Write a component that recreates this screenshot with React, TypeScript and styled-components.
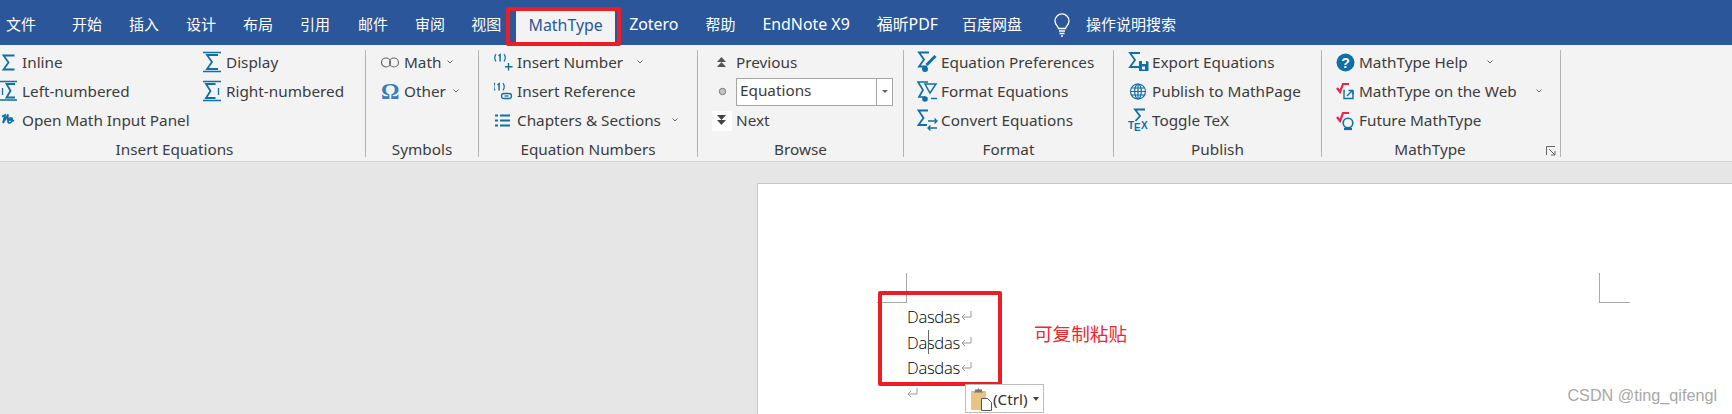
import React from "react";
import styled, { createGlobalStyle } from "styled-components";

const BLUE = "#0f6fa8";
const RED = "#e8254a";

const Global = createGlobalStyle`
  html, body { margin: 0; padding: 0; background: #e6e6e6; }
  body { font-family: "Noto Sans", "Noto Sans CJK SC", sans-serif; overflow: hidden; }
`;

const Screen = styled.div`
  width: 1732px;
  height: 414px;
  display: flex;
  flex-direction: column;
  overflow: hidden;
  position: relative;
  background: #e6e6e6;
`;

const TitleBar = styled.div`
  height: 45px;
  flex: none;
  display: flex;
  align-items: flex-end;
  background: #2b579a;
  padding-left: 6px;
`;

const Tab = styled.div<{ $active?: boolean; $gap?: number; $latin?: boolean }>`
  height: ${(p) => (p.$active ? 35 : 45)}px;
  line-height: ${(p) => (p.$active ? 30 : 49)}px;
  margin-left: ${(p) => p.$gap ?? 0}px;
  width: ${(p) => (p.$active ? "99px" : "auto")};
  text-align: center;
  font-size: ${(p) => (p.$latin ? 15.9 : 15)}px;
  white-space: nowrap;
  color: ${(p) => (p.$active ? "#2b579a" : "#fff")};
  background: ${(p) => (p.$active ? "#f3f3f3" : "transparent")};
`;

const Bulb = styled.svg`
  width: 18px;
  height: 24px;
  margin-left: 31px;
  margin-bottom: 8px;
  flex: none;
`;

const Ribbon = styled.div`
  height: 117px;
  flex: none;
  box-sizing: border-box;
  padding-top: 5px;
  display: flex;
  align-items: flex-start;
  background: #f3f3f3;
  border-bottom: 1px solid #d2d2d2;
`;

const Group = styled.section<{ $width: number }>`
  position: relative;
  width: ${(p) => p.$width}px;
  height: 107px;
  flex: none;
  box-sizing: border-box;
  border-right: 1px solid #b4b4b4;
  display: flex;
  flex-direction: column;
`;

const Columns = styled.div`
  display: flex;
`;

const Stack = styled.div<{ $pad?: number; $width?: number }>`
  display: flex;
  flex-direction: column;
  row-gap: 4px;
  padding-left: ${(p) => p.$pad ?? 0}px;
  ${(p) => (p.$width ? `width: ${p.$width}px;` : "")}
`;

const Row = styled.div`
  height: 25px;
  box-sizing: border-box;
  padding-bottom: 2px;
  display: flex;
  align-items: center;
  font-size: 15.3px;
  color: #3c3c3c;
  white-space: nowrap;
`;

const IconSlot = styled.span<{ $w: number }>`
  width: ${(p) => p.$w}px;
  height: 25px;
  margin-bottom: -2px;
  flex: none;
  display: flex;
  align-items: center;
`;

const Chevron = styled.svg<{ $gap: number }>`
  width: 8px;
  height: 6px;
  margin-left: ${(p) => p.$gap}px;
  flex: none;
`;

const GroupLabel = styled.div<{ $shift?: number }>`
  margin-top: auto;
  margin-bottom: 1px;
  padding-right: ${(p) => p.$shift ?? 0}px;
  height: 14px;
  line-height: 14px;
  font-size: 15.3px;
  color: #3c3c3c;
  text-align: center;
  white-space: nowrap;
`;

const Launcher = styled.svg`
  position: absolute;
  right: 4px;
  bottom: 1px;
  width: 10px;
  height: 10px;
`;

const Omega = styled.span`
  font-family: "Liberation Serif", serif;
  font-weight: 700;
  font-size: 23px;
  line-height: 25px;
  color: #3b7dbb;
`;

const Combo = styled.div`
  width: 157px;
  height: 28px;
  margin-bottom: -2px;
  box-sizing: border-box;
  padding-bottom: 3px;
  display: flex;
  align-items: center;
  background: #fff;
  border: 1px solid #a6a6a6;
`;

const ComboText = styled.span`
  flex: 1;
  padding-left: 3px;
`;

const ComboArrow = styled.span`
  width: 15px;
  align-self: stretch;
  margin-bottom: -3px;
  border-left: 1px solid #a6a6a6;
  display: flex;
  align-items: center;
  justify-content: center;
  &::after {
    content: "";
    border-left: 3.5px solid transparent;
    border-right: 3.5px solid transparent;
    border-top: 3.5px solid #666;
  }
`;

const NextBack = styled.span`
  width: 20px;
  height: 20px;
  background: #fff;
  display: flex;
`;

const Workspace = styled.div`
  flex: 1;
  position: relative;
  display: flex;
  padding: 21px 0 0 757px;
  background: #e6e6e6;
`;

const Page = styled.div`
  flex: 1;
  box-sizing: border-box;
  padding: 120px 0 0 149px;
  background: #fff;
  border-left: 1px solid #c8c8c8;
  border-top: 1px solid #c8c8c8;
`;

const Para = styled.div`
  height: 25.5px;
  line-height: 25.5px;
  font-size: 16.6px;
  font-weight: 300;
  font-family: "Open Sans", sans-serif;
  letter-spacing: -0.3px;
  color: #000;
  display: flex;
  align-items: center;
  position: relative;
`;

const Return = styled.svg<{ $flush?: boolean }>`
  width: 11px;
  height: 11px;
  margin-left: ${(p) => (p.$flush ? 0 : 1)}px;
  margin-bottom: 2px;
  flex: none;
`;

const Caret = styled.i`
  position: absolute;
  left: 21px;
  top: 0;
  width: 1px;
  height: 24px;
  background: #666;
`;

const Crop = styled.div<{ $x: number; $y: number; $left?: boolean }>`
  position: absolute;
  left: ${(p) => p.$x}px;
  top: ${(p) => p.$y}px;
  width: ${(p) => (p.$left ? 30 : 31)}px;
  height: 30px;
  box-sizing: border-box;
  border-bottom: 1px solid #a8a8a8;
  ${(p) => (p.$left ? "border-right: 1px solid #a8a8a8;" : "border-left: 1px solid #a8a8a8;")}
`;

const Callout = styled.div<{ $x: number; $y: number; $w: number; $h: number }>`
  position: absolute;
  left: ${(p) => p.$x}px;
  top: ${(p) => p.$y}px;
  width: ${(p) => p.$w}px;
  height: ${(p) => p.$h}px;
  box-sizing: border-box;
  border: 4px solid #ee1c25;
  border-radius: 2px;
`;

const Note = styled.div`
  position: absolute;
  left: 1034px;
  top: 320px;
  font-size: 18.6px;
  line-height: 26px;
  color: #f0282e;
  font-family: "Noto Sans CJK SC", sans-serif;
`;

const PasteTag = styled.div`
  position: absolute;
  left: 965px;
  top: 384px;
  width: 79px;
  height: 29px;
  box-sizing: border-box;
  padding-left: 4px;
  display: flex;
  align-items: center;
  background: #fff;
  border: 1px solid #bdbdbd;
  font-size: 15.3px;
  color: #333;
`;

const PasteCaret = styled.i`
  margin-left: 5px;
  border-left: 3.5px solid transparent;
  border-right: 3.5px solid transparent;
  border-top: 4px solid #444;
`;

const Watermark = styled.div`
  position: absolute;
  right: 15px;
  top: 384px;
  font-family: "Liberation Sans", sans-serif;
  font-size: 16.2px;
  line-height: 22px;
  color: #a8a8a8;
`;

const S = ({ w, h = 25, children }: { w: number; h?: number; children: React.ReactNode }) => (
  <svg width={w} height={h} viewBox={`0 0 ${w} ${h}`} fill="none" stroke={BLUE} strokeWidth="1.5">
    {children}
  </svg>
);

const Sigma = ({ d }: { d: string }) => <path d={d} strokeWidth="1.8" />;

const Down = ({ gap }: { gap: number }) => (
  <Chevron $gap={gap} viewBox="0 0 8 6" fill="none" stroke="#666" strokeWidth="1">
    <path d="M1.5 1.5l2.500 2.500 2.500-2.500" />
  </Chevron>
);

const Num = ({ x = 0, y = 0 }: { x?: number; y?: number }) => (
  <g strokeWidth="1.2" transform={`translate(${x} ${y})`}>
    <path d="M2 2.500c-1.600 2.400-1.600 5 0 7.400M10 2.500c1.600 2.400 1.600 5 0 7.400" />
    <path d="M4.500 4.400l1.600-1.200v6.800" strokeWidth="1.500" />
  </g>
);

const PasteIcon = styled.svg`
  flex: none;
  margin-right: -1px;
`;

const Item = ({ icon, slot, children }: { icon: React.ReactNode; slot: number; children: React.ReactNode }) => (
  <Row>
    <IconSlot $w={slot}>{icon}</IconSlot>
    {children}
  </Row>
);

const Sqrt = () => (
  <g fill="none" stroke={RED}>
    <path d="M1 8l3 4 3-8h6" strokeWidth="2.200" />
  </g>
);

const ReturnMark = ({ flush }: { flush?: boolean }) => (
  <Return $flush={flush} viewBox="0 0 11 11" fill="none" stroke="#999" strokeWidth="1">
    <path d="M10 1v6H1M4 4L1 7l3 3" />
  </Return>
);

export default function App() {
  return (
    <Screen>
      <Global />
      <TitleBar>
        <Tab>文件</Tab>
        <Tab $gap={36}>开始</Tab>
        <Tab $gap={27}>插入</Tab>
        <Tab $gap={27}>设计</Tab>
        <Tab $gap={27}>布局</Tab>
        <Tab $gap={27}>引用</Tab>
        <Tab $gap={28}>邮件</Tab>
        <Tab $gap={27}>审阅</Tab>
        <Tab $gap={26}>视图</Tab>
        <Tab $active $latin $gap={15}>MathType</Tab>
        <Tab $latin $gap={14}>Zotero</Tab>
        <Tab $gap={27}>帮助</Tab>
        <Tab $latin $gap={27}>EndNote X9</Tab>
        <Tab $latin $gap={27}>福昕PDF</Tab>
        <Tab $gap={24}>百度网盘</Tab>
        <Bulb viewBox="0 0 18 24" fill="none" stroke="#fff" strokeWidth="1.300">
          <path d="M5.500 15.500c0-2-3.500-3.500-3.500-7.600a7 7 0 0 1 14 0c0 4.100-3.500 5.600-3.500 7.600z" />
          <path d="M6 18h6M6.500 20.500h5M8 23h2" />
        </Bulb>
        <Tab $gap={15}>操作说明搜索</Tab>
      </TitleBar>

      <Ribbon>
        <Group $width={366}>
          <Columns>
            <Stack $width={203}>
              <Item slot={22} icon={<S w={18}><Sigma d="M14.500 5.500H3.500l5 7-5 7h11" /></S>}>Inline</Item>
              <Item slot={22} icon={
                <S w={18}>
                  <path d="M0 2.500h17M0 21h17" />
                  <Sigma d="M15 5H6.500l4 6.700-4 6.800H15" />
                  <path d="M2.500 9v7" strokeWidth="1.300" />
                </S>
              }>Left-numbered</Item>
              <Item slot={22} icon={
                <S w={18}>
                  <path d="M2 8.500l3-1.500-2 8 5-8.500-.5 6c1.500-3.500 5-3.500 4.800-.5-.2 3-4.300 4-4.300 1.500 0-2 3.500-2 6-.5" strokeWidth="1.700" />
                </S>
              }>Open Math Input Panel</Item>
            </Stack>
            <Stack>
              <Item slot={23} icon={
                <S w={20}>
                  <path d="M0 2.500h18M0 21.500h18" />
                  <Sigma d="M15 5H4l5 7-5 7h11" />
                </S>
              }>Display</Item>
              <Item slot={23} icon={
                <S w={20}>
                  <path d="M0 2.500h18M0 21.500h18" />
                  <Sigma d="M12.500 5H3l4.500 7L3 19h9.500" />
                  <path d="M15.500 9v7" strokeWidth="1.300" />
                </S>
              }>Right-numbered</Item>
            </Stack>
          </Columns>
          <GroupLabel $shift={16}>Insert Equations</GroupLabel>
        </Group>

        <Group $width={113}>
          <Stack $pad={15}>
            <Item slot={23} icon={
              <S w={19}>
                <g stroke="#666" strokeWidth="1.100">
                  <circle cx="5" cy="12.500" r="4.500" />
                  <circle cx="13" cy="12.500" r="4.500" />
                </g>
              </S>
            }>Math<Down gap={5} /></Item>
            <Item slot={23} icon={<Omega>Ω</Omega>}>Other<Down gap={6} /></Item>
          </Stack>
          <GroupLabel>Symbols</GroupLabel>
        </Group>

        <Group $width={219}>
          <Stack $pad={15}>
            <Item slot={23} icon={
              <S w={20}>
                <Num y={1.500} />
                <path d="M14.500 13v7.500M11 16.700h7.500" strokeWidth="1.400" />
              </S>
            }>Insert Number<Down gap={13} /></Item>
            <Item slot={23} icon={
              <S w={20}>
                <Num x={-1} y={1.500} />
                <rect x="7.500" y="14.500" width="10" height="5" rx="2.500" strokeWidth="1.300" />
                <path d="M10.500 17h4" strokeWidth="1.300" />
              </S>
            }>Insert Reference</Item>
            <Item slot={23} icon={
              <S w={20}>
                <path d="M1 7.500h3M1 12.500h3M1 17.500h3" strokeWidth="2.200" />
                <path d="M6 7.500h10M6 12.500h10M6 17.500h10" strokeWidth="2" />
              </S>
            }>Chapters &amp; Sections<Down gap={10} /></Item>
          </Stack>
          <GroupLabel>Equation Numbers</GroupLabel>
        </Group>

        <Group $width={206}>
          <Stack $pad={14}>
            <Item slot={24} icon={
              <S w={20}>
                <path d="M5 12l4.500-5L14 12zM5 17l4.500-5 4.500 5z" fill="#555" stroke="none" />
              </S>
            }>Previous</Item>
            <Item slot={24} icon={
              <S w={20}>
                <circle cx="10.500" cy="12.500" r="3.200" fill="#c4c4c4" stroke="#7a7a7a" strokeWidth="1" />
              </S>
            }><Combo><ComboText>Equations</ComboText><ComboArrow /></Combo></Item>
            <Item slot={24} icon={
              <NextBack>
                <S w={20} h={20}>
                  <path d="M5 4l4.500 5L14 4zM5 9l4.500 5L14 9z" fill="#444" stroke="none" />
                </S>
              </NextBack>
            }>Next</Item>
          </Stack>
          <GroupLabel>Browse</GroupLabel>
        </Group>

        <Group $width={210}>
          <Stack $pad={13}>
            <Item slot={24} icon={
              <S w={21}>
                <Sigma d="M12 2.500H2l5 7-5 7h8" />
                <path d="M9.500 15l9-9" strokeWidth="3" />
                <circle cx="8" cy="19" r="3" fill={BLUE} stroke="none" />
              </S>
            }>Equation Preferences</Item>
            <Item slot={24} icon={
              <S w={21}>
                <path d="M11 3H1l5 8-4 7h6" strokeWidth="1.700" />
                <path d="M8 5h11l-6 9z" strokeWidth="1.500" />
                <circle cx="8" cy="20" r="2.800" fill={BLUE} stroke="none" />
                <path d="M14 19.500h6" />
              </S>
            }>Format Equations</Item>
            <Item slot={24} icon={
              <S w={21}>
                <Sigma d="M11 2.500H1.500l5 7.500-5 7H10" />
                <path d="M11 13h9M17.500 10.500L20 13l-2.500 2.500M20 20h-9M13.500 17.500L11 20l2.500 2.500" strokeWidth="1.300" />
              </S>
            }>Convert Equations</Item>
          </Stack>
          <GroupLabel>Format</GroupLabel>
        </Group>

        <Group $width={208}>
          <Stack $pad={14}>
            <Item slot={24} icon={
              <S w={21}>
                <Sigma d="M12 3H2l5 7-5 7h10" />
                <path d="M11 11h8.500l1 1.500V21H11z" fill={BLUE} stroke="none" />
                <path d="M14 11h4v3h-4z" fill="#f3f3f3" stroke="none" />
                <rect x="14" y="16.500" width="3" height="3" fill="#f3f3f3" stroke="none" />
              </S>
            }>Export Equations</Item>
            <Item slot={24} icon={
              <S w={20}>
                <g strokeWidth="1.200">
                  <circle cx="10" cy="12.500" r="7.500" />
                  <ellipse cx="10" cy="12.500" rx="3.300" ry="7.500" />
                  <path d="M2.500 12.500h15M3.500 9h13M3.500 16h13M10 5v15" />
                </g>
              </S>
            }>Publish to MathPage</Item>
            <Item slot={24} icon={
              <S w={20}>
                <Sigma d="M17 1.500H7l5 6.500-4.500 5" />
                <g stroke="none" fill={BLUE} fontFamily="Liberation Sans" fontWeight="700" fontSize="10">
                  <text x="0" y="21">T</text>
                  <text x="6" y="23">E</text>
                  <text x="13" y="21">X</text>
                </g>
              </S>
            }>Toggle TeX</Item>
          </Stack>
          <GroupLabel>Publish</GroupLabel>
        </Group>

        <Group $width={239}>
          <Stack $pad={14}>
            <Item slot={23} icon={
              <S w={19}>
                <circle cx="9.500" cy="12.500" r="9" fill={BLUE} stroke="none" />
                <text x="9.500" y="17.500" textAnchor="middle" fill="#fff" stroke="none" fontFamily="Liberation Sans" fontWeight="700" fontSize="14">?</text>
              </S>
            }>MathType Help<Down gap={18} /></Item>
            <Item slot={23} icon={
              <S w={19}>
                <g transform="translate(0 1)"><Sqrt /></g>
                <path d="M9 11.500h-1v8h9v-7" strokeWidth="1.400" />
                <path d="M11 17l5-5M12.500 11.500h4.500v4" strokeWidth="1.400" />
              </S>
            }>MathType on the Web<Down gap={18} /></Item>
            <Item slot={23} icon={
              <S w={19}>
                <g transform="translate(0 1)"><Sqrt /></g>
                <circle cx="12" cy="15" r="4.800" strokeWidth="1.600" />
                <path d="M8 21h8" strokeWidth="2.200" />
              </S>
            }>Future MathType</Item>
          </Stack>
          <GroupLabel $shift={22}>MathType</GroupLabel>
          <Launcher viewBox="0 0 10 10" fill="none" stroke="#666" strokeWidth="1">
            <path d="M.5 9V.5H9M3 3l6 6M5 9h4V5" />
          </Launcher>
        </Group>
      </Ribbon>

      <Workspace>
        <Page>
          <Para>Dasdas<ReturnMark /></Para>
          <Para>Dasdas<ReturnMark /><Caret /></Para>
          <Para>Dasdas<ReturnMark /></Para>
          <Para><ReturnMark flush /></Para>
        </Page>
      </Workspace>

      <Crop $x={877} $y={273} $left />
      <Crop $x={1599} $y={273} />
      <Callout $x={506} $y={7} $w={115} $h={39} />
      <Callout $x={878} $y={291} $w={124} $h={95} />
      <Note>可复制粘贴</Note>
      <PasteTag>
        <PasteIcon width="24" height="24" viewBox="0 0 24 24" fill="none">
          <path d="M1 4h15v19H1z" fill="#e8c383" />
          <path d="M5 4V2.500h2.500L8.500 1l1 1.500H12V4l1 1.500H4z" fill="#777" />
          <path d="M11.500 11.500h6l4 4v8h-10z" fill="#fff" stroke="#555" />
        </PasteIcon>
        (Ctrl)
        <PasteCaret />
      </PasteTag>
      <Watermark>CSDN @ting_qifengl</Watermark>
    </Screen>
  );
}
